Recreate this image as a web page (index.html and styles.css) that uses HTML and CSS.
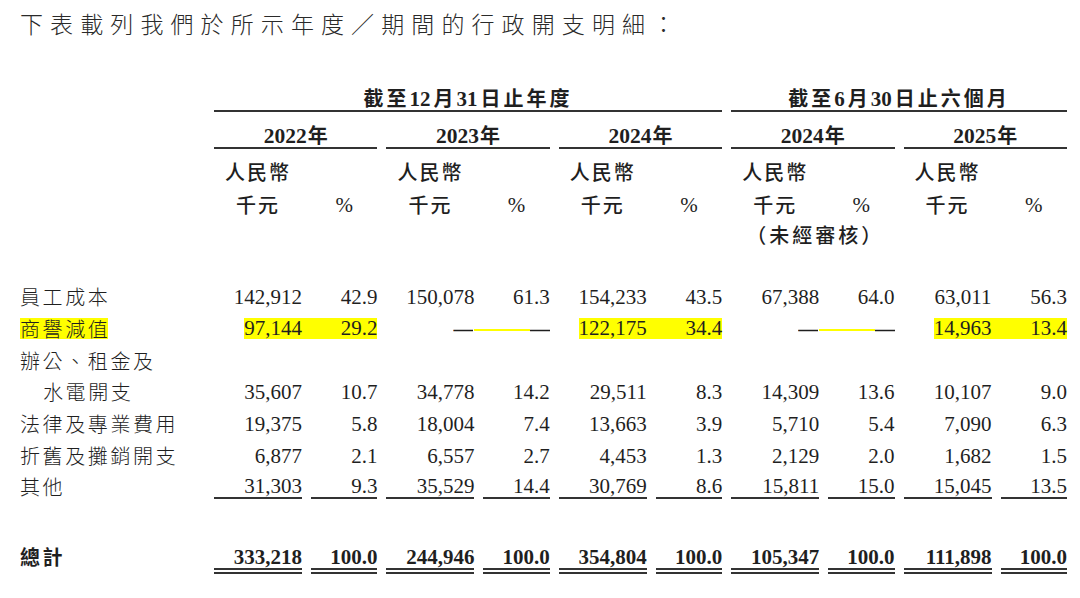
FILE: index.html
```html
<!DOCTYPE html>
<html lang="zh-Hant">
<head>
<meta charset="utf-8">
<title>行政開支明細</title>
<link rel="stylesheet" href="styles.css">
</head>
<body>
<p class="title">下表載列我們於所示年度／期間的行政開支明細：</p>
<div class="tbl">
  <div class="row r-group">
    <div class="gh g1">截至<span class="n">12</span>月<span class="n">31</span>日止年度</div>
    <div class="gh g2">截至<span class="n">6</span>月<span class="n">30</span>日止六個月</div>
  </div>
  <div class="row r-year">
    <div></div>
    <div class="yr"><span class="n">2022</span>年</div>
    <div class="yr"><span class="n">2023</span>年</div>
    <div class="yr"><span class="n">2024</span>年</div>
    <div class="yr"><span class="n">2024</span>年</div>
    <div class="yr"><span class="n">2025</span>年</div>
  </div>
  <div class="row hdr r-c">
    <div></div>
    <div>人民幣</div><div></div>
    <div>人民幣</div><div></div>
    <div>人民幣</div><div></div>
    <div>人民幣</div><div></div>
    <div>人民幣</div><div></div>
  </div>
  <div class="row hdr r-d">
    <div></div>
    <div>千元</div><div class="pc">%</div>
    <div>千元</div><div class="pc">%</div>
    <div>千元</div><div class="pc">%</div>
    <div>千元</div><div class="pc">%</div>
    <div>千元</div><div class="pc">%</div>
  </div>
  <div class="row hdr r-e">
    <div class="audit">（未經審核）</div>
  </div>

  <div class="row dr first">
    <div class="lab">員工成本</div>
    <div class="num">142,912</div><div class="num">42.9</div>
    <div class="num">150,078</div><div class="num">61.3</div>
    <div class="num">154,233</div><div class="num">43.5</div>
    <div class="num">67,388</div><div class="num">64.0</div>
    <div class="num">63,011</div><div class="num">56.3</div>
  </div>
  <div class="row dr">
    <div class="lab"><span class="hl">商譽減<span class="end">值</span></span></div>
    <div class="hlpair"><div class="box"><span class="a">97,144</span><span class="p">29.2</span></div></div>
    <div class="dpair"><div class="in"><span class="d">—</span><span class="bar"></span><span class="d">—</span></div></div>
    <div class="hlpair"><div class="box"><span class="a">122,175</span><span class="p">34.4</span></div></div>
    <div class="dpair"><div class="in"><span class="d">—</span><span class="bar"></span><span class="d">—</span></div></div>
    <div class="hlpair"><div class="box"><span class="a">14,963</span><span class="p">13.4</span></div></div>
  </div>
  <div class="row dr">
    <div class="lab">辦公<span class="sc">、</span>租金及</div>
  </div>
  <div class="row dr">
    <div class="lab indent">水電開支</div>
    <div class="num">35,607</div><div class="num">10.7</div>
    <div class="num">34,778</div><div class="num">14.2</div>
    <div class="num">29,511</div><div class="num">8.3</div>
    <div class="num">14,309</div><div class="num">13.6</div>
    <div class="num">10,107</div><div class="num">9.0</div>
  </div>
  <div class="row dr">
    <div class="lab">法律及專業費用</div>
    <div class="num">19,375</div><div class="num">5.8</div>
    <div class="num">18,004</div><div class="num">7.4</div>
    <div class="num">13,663</div><div class="num">3.9</div>
    <div class="num">5,710</div><div class="num">5.4</div>
    <div class="num">7,090</div><div class="num">6.3</div>
  </div>
  <div class="row dr">
    <div class="lab">折舊及攤銷開支</div>
    <div class="num">6,877</div><div class="num">2.1</div>
    <div class="num">6,557</div><div class="num">2.7</div>
    <div class="num">4,453</div><div class="num">1.3</div>
    <div class="num">2,129</div><div class="num">2.0</div>
    <div class="num">1,682</div><div class="num">1.5</div>
  </div>
  <div class="row dr last">
    <div class="lab">其他</div>
    <div class="num">31,303</div><div class="num">9.3</div>
    <div class="num">35,529</div><div class="num">14.4</div>
    <div class="num">30,769</div><div class="num">8.6</div>
    <div class="num">15,811</div><div class="num">15.0</div>
    <div class="num">15,045</div><div class="num">13.5</div>
  </div>
  <div class="row tot">
    <div class="lab">總計</div>
    <div class="num">333,218</div><div class="num">100.0</div>
    <div class="num">244,946</div><div class="num">100.0</div>
    <div class="num">354,804</div><div class="num">100.0</div>
    <div class="num">105,347</div><div class="num">100.0</div>
    <div class="num">111,898</div><div class="num">100.0</div>
  </div>
</div>
</body>
</html>
```

FILE: styles.css
```css
* { box-sizing: border-box; margin: 0; padding: 0; }

body {
  margin: 0;
  background: #ffffff;
  color: #1f1f1f;
  font-family: "Noto Sans CJK TC", "Noto Sans CJK SC", sans-serif;
}

.title {
  padding-left: 20px;
  height: 47px;
  line-height: 47px;
  font-size: 23px;
  letter-spacing: 7.1px;
  color: #2a2a2a;
  white-space: nowrap;
  font-weight: 300;
}

.tbl {
  padding: 37.5px 0 0 20px;
}

.row {
  display: grid;
  grid-template-columns: 185px repeat(5, 88px 66.4px);
  column-gap: 9px;
}

.n {
  font-family: "Liberation Serif", serif;
  letter-spacing: 0;
  line-height: 0;
}

/* group header */
.r-group {
  line-height: 25px;
  font-size: 20px;
  font-weight: 700;
}
.gh {
  text-align: center;
  border-bottom: 2px solid #333;
  letter-spacing: 3px;
  white-space: nowrap;
}
.gh .n {
  font-size: 21px;
  margin-right: 3px;
}
.g1 { grid-column: 2 / 8; }
.g2 { grid-column: 8 / 12; }

/* years */
.yr {
  grid-column: span 2;
  text-align: center;
  padding-top: 11px;
  line-height: 24px;
  border-bottom: 2px solid #333;
  font-weight: 700;
  font-size: 20px;
}
.yr .n {
  font-size: 21.5px;
  margin-right: 1px;
}

/* unit headers */
.hdr {
  font-size: 20px;
  line-height: 24px;
  font-weight: 500;
  letter-spacing: 2px;
  text-align: center;
}
.r-c { margin-top: 11px; }
.r-d { margin-top: 9px; }
.r-e { margin-top: 6.5px; }
.hdr .pc {
  font-family: "Liberation Serif", serif;
  font-size: 21px;
  font-weight: 400;
  letter-spacing: 0;
}
.audit {
  grid-column: 8 / 10;
  text-align: left;
  padding-left: 15px;
  white-space: nowrap;
  letter-spacing: 3px;
}

/* data rows */
.dr {
  height: 31.67px;
  align-items: center;
}
.dr.first { margin-top: 34.5px; }

.lab {
  font-size: 20px;
  letter-spacing: 2.6px;
  line-height: 24px;
  white-space: nowrap;
  font-weight: 300;
}
.indent { padding-left: 23px; }
.sc { font-family: "Noto Sans CJK SC", sans-serif; }

.num {
  font-family: "Liberation Serif", serif;
  font-size: 21px;
  line-height: 24px;
  text-align: right;
}

.hl {
  display: inline-block;
  background: #ffff00;
  line-height: 21px;
}
.hl .end { letter-spacing: 0; }

.hlpair {
  grid-column: span 2;
  display: flex;
  justify-content: flex-end;
}
.hlpair .box {
  display: flex;
  background: #ffff00;
  font-family: "Liberation Serif", serif;
  font-size: 21px;
  line-height: 21px;
}
.hlpair .p {
  width: 66.4px;
  margin-left: 9px;
  text-align: right;
}

.dpair {
  grid-column: span 2;
  display: flex;
  justify-content: flex-end;
}
.dpair .in {
  display: flex;
  align-items: center;
  width: 96.4px;
  font-family: "Liberation Serif", serif;
  font-size: 21px;
  line-height: 24px;
}
.dpair .d {
  font-weight: 700;
  width: 20px;
  overflow: hidden;
}
.dpair .in .d:first-child { margin-right: 1px; }
.dpair .bar {
  flex: 1;
  height: 2px;
  margin-top: 2px;
  background: #ffff00;
}

.last .num {
  line-height: 22px;
  border-bottom: 2px solid #333;
}

.tot {
  margin-top: 43px;
  align-items: start;
}
.tot .lab,
.tot .num {
  font-weight: 700;
  line-height: 22px;
}
.tot .num {
  border-bottom: 6px double #333;
}
```
